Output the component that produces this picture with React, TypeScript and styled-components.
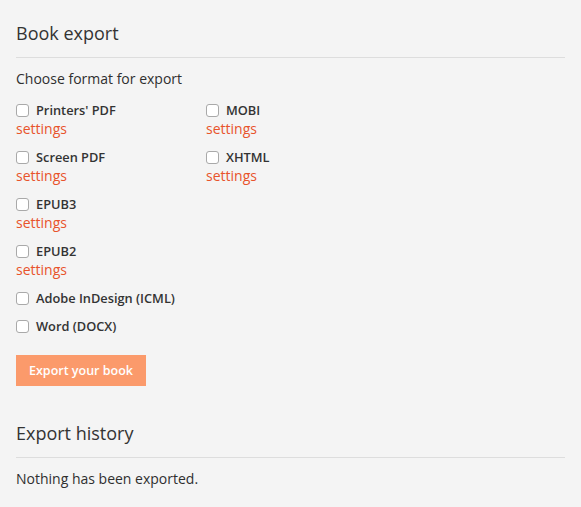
import React from "react";
import styled, { createGlobalStyle } from "styled-components";

const GlobalStyle = createGlobalStyle`
  html, body {
    margin: 0;
    padding: 0;
    background: #f4f4f4;
  }
  body {
    font-family: "Open Sans", "Noto Sans", sans-serif;
    color: #333;
  }
`;

const Page = styled.div`
  padding: 21px 16px 0 16px;
  min-height: 507px;
  box-sizing: border-box;
`;

const SectionTitle = styled.h2`
  margin: 0;
  padding-bottom: 11px;
  font-size: 18px;
  font-weight: 400;
  line-height: 25px;
  color: #333;
  border-bottom: 1px solid #ddd;
`;

const Paragraph = styled.p`
  margin: 11px 0 0 0;
  font-size: 14px;
  line-height: 20px;
  color: #2f2f2f;
`;

const FormatGrid = styled.div`
  margin-top: 12px;
  display: grid;
  grid-template-columns: 190px 190px;
  row-gap: 9px;
`;

const FormatItem = styled.div<{ $single?: boolean }>`
  display: flex;
  flex-direction: column;
  grid-column: ${(p) => (p.$single ? "1" : "auto")};
`;

const FormatLabel = styled.label`
  display: flex;
  align-items: center;
  gap: 7px;
  font-size: 12.8px;
  font-weight: 600;
  line-height: 19px;
  color: #333;
  cursor: pointer;
`;

const Check = styled.input`
  appearance: none;
  margin: 0;
  width: 13px;
  height: 13px;
  box-sizing: border-box;
  border: 1px solid #a9a9a9;
  border-radius: 3px;
  background: #fff;
`;

const SettingsLink = styled.a`
  margin-top: -1px;
  font-size: 14px;
  line-height: 20px;
  color: #e8532b;
  text-decoration: none;
  cursor: pointer;
`;

const ExportButton = styled.button`
  margin-top: 19px;
  height: 31px;
  padding: 0 13px;
  border: none;
  background: #fb9a6b;
  color: #fff;
  font-family: inherit;
  font-size: 12.5px;
  font-weight: 600;
  cursor: pointer;
`;

const HistorySection = styled.section`
  margin-top: 35px;
`;

type Format = { name: string; settings: boolean; single?: boolean };

const formats: Format[] = [
  { name: "Printers' PDF", settings: true },
  { name: "MOBI", settings: true },
  { name: "Screen PDF", settings: true },
  { name: "XHTML", settings: true },
  { name: "EPUB3", settings: true, single: true },
  { name: "EPUB2", settings: true, single: true },
  { name: "Adobe InDesign (ICML)", settings: false, single: true },
  { name: "Word (DOCX)", settings: false, single: true },
];

export default function App() {
  return (
    <>
      <GlobalStyle />
      <Page>
        <SectionTitle>Book export</SectionTitle>
        <Paragraph>Choose format for export</Paragraph>
        <FormatGrid>
          {formats.map((f) => (
            <FormatItem key={f.name} $single={f.single}>
              <FormatLabel>
                <Check type="checkbox" />
                {f.name}
              </FormatLabel>
              {f.settings && <SettingsLink>settings</SettingsLink>}
            </FormatItem>
          ))}
        </FormatGrid>
        <ExportButton>Export your book</ExportButton>
        <HistorySection>
          <SectionTitle>Export history</SectionTitle>
          <Paragraph>Nothing has been exported.</Paragraph>
        </HistorySection>
      </Page>
    </>
  );
}
